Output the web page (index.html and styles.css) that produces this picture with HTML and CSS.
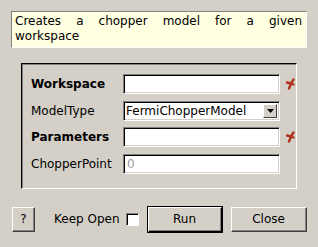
FILE: index.html
```html
<!DOCTYPE html>
<html lang="en">

<head>
    <meta charset="UTF-8">
    <title>CreateChopperModel</title>
    <link rel="stylesheet" href="styles.css">
</head>

<body>
    <div id="dialog">
        <p id="desc">Creates a chopper model for a given workspace</p>

        <div id="props">
            <label class="name bold">Workspace</label>
            <input class="field" type="text" />
            <span class="req"><svg width="9" height="12" viewBox="0 0 9 12"><path d="M7.5 1.5 L5 5.5 L3 10.5 M1 4.5 L5 5.5 M5 5.5 L7.5 6.5" stroke="#b0301c" stroke-width="2.4" fill="none" stroke-linecap="round"/></svg></span>

            <label class="name">ModelType</label>
            <div class="field combo">
                <span class="value">FermiChopperModel</span>
                <span class="drop"><svg width="7" height="4" viewBox="0 0 7 4"><path d="M0 0 H7 L3.5 4 Z" fill="#000"/></svg></span>
            </div>
            <span></span>

            <label class="name bold">Parameters</label>
            <input class="field" type="text" />
            <span class="req"><svg width="9" height="12" viewBox="0 0 9 12"><path d="M7.5 1.5 L5 5.5 L3 10.5 M1 4.5 L5 5.5 M5 5.5 L7.5 6.5" stroke="#b0301c" stroke-width="2.4" fill="none" stroke-linecap="round"/></svg></span>

            <label class="name">ChopperPoint</label>
            <input class="field" type="text" placeholder="0" />
            <span></span>
        </div>

        <div id="actions">
            <button class="btn help">?</button>
            <span class="keep">Keep Open</span>
            <span class="check"></span>
            <button class="btn run">Run</button>
            <button class="btn close">Close</button>
        </div>
    </div>
</body>

</html>
```

FILE: styles.css
```css
html, body {
    margin: 0;
    width: 318px;
    height: 247px;
    overflow: hidden;
    background-color: #d4d0c8; /* dialog grey */
    font-family: "DejaVu Sans", sans-serif;
    font-size: 12px;
    color: #000;
}

#dialog {
    padding: 11px 11px 0 11px;
}

#desc {
    margin: 0;
    height: 30px;
    padding: 2px 4px 3px 3px;
    line-height: 15px;
    text-align: justify;
    background-color: #ffffe1;
    border-top: 1px solid #808080;
    border-left: 1px solid #808080;
    border-bottom: 1px solid #fff;
    border-right: 1px solid #fff;
}

#props {
    margin: 15px 0 0 10px;
    width: 255px;
    padding: 10px 10px 14px 9px;
    border-top: 1px solid #000;
    border-left: 1px solid #000;
    border-bottom: 1px solid #fff;
    border-right: 1px solid #fff;
    box-shadow: inset 1px 1px #808080;
    display: grid;
    grid-template-columns: 92px 157px 1fr;
    grid-auto-rows: 20px;
    row-gap: 6.66px;
    align-items: center;
}

.name {
    white-space: nowrap;
}

.bold {
    font-weight: bold;
}

.field {
    box-sizing: border-box;
    height: 20px;
    width: 157px;
    margin: 0;
    padding: 0 3px;
    font: inherit;
    background-color: #fff;
    border-top: 1px solid #808080;
    border-left: 1px solid #808080;
    border-bottom: 1px solid #fff;
    border-right: 1px solid #fff;
    box-shadow: inset 1px 1px #000, inset -1px -1px #d4d0c8;
    outline: none;
}

.field::placeholder {
    color: #9a9a9a;
}

.combo {
    display: flex;
    align-items: center;
    padding: 0 2px 0 2px;
}

.combo .value {
    flex: 1;
}

.drop {
    width: 14px;
    height: 14px;
    box-sizing: border-box;
    display: flex;
    align-items: center;
    justify-content: center;
    background-color: #d4d0c8;
    border-top: 1px solid #fff;
    border-left: 1px solid #fff;
    border-bottom: 1px solid #404040;
    border-right: 1px solid #404040;
}

.req {
    padding-left: 6px;
    padding-top: 3px;
}

#actions {
    margin-top: 17px;
    margin-left: 1px;
    display: flex;
    align-items: center;
}

.btn {
    box-sizing: border-box;
    margin: 0;
    padding: 0;
    font: inherit;
    color: #000;
    background-color: #d4d0c8;
    border-top: 1px solid #fff;
    border-left: 1px solid #fff;
    border-bottom: 1px solid #404040;
    border-right: 1px solid #404040;
    box-shadow: inset -1px -1px #808080;
}

.help {
    width: 23px;
    height: 25px;
}

.keep {
    margin-left: 19px;
}

.check {
    box-sizing: border-box;
    width: 13px;
    height: 13px;
    margin-left: 6px;
    background-color: #fff;
    border-top: 1px solid #808080;
    border-left: 1px solid #808080;
    border-bottom: 1px solid #fff;
    border-right: 1px solid #fff;
    box-shadow: inset 1px 1px #000;
}

.run {
    width: 76px;
    height: 27px;
    margin-left: 8px;
    outline: 1px solid #000;
    outline-offset: -1px;
    border-width: 2px 2px 2px 2px;
    border-color: #fff #000 #000 #fff;
}

.close {
    width: 76px;
    height: 25px;
    margin-left: 8px;
}
```
